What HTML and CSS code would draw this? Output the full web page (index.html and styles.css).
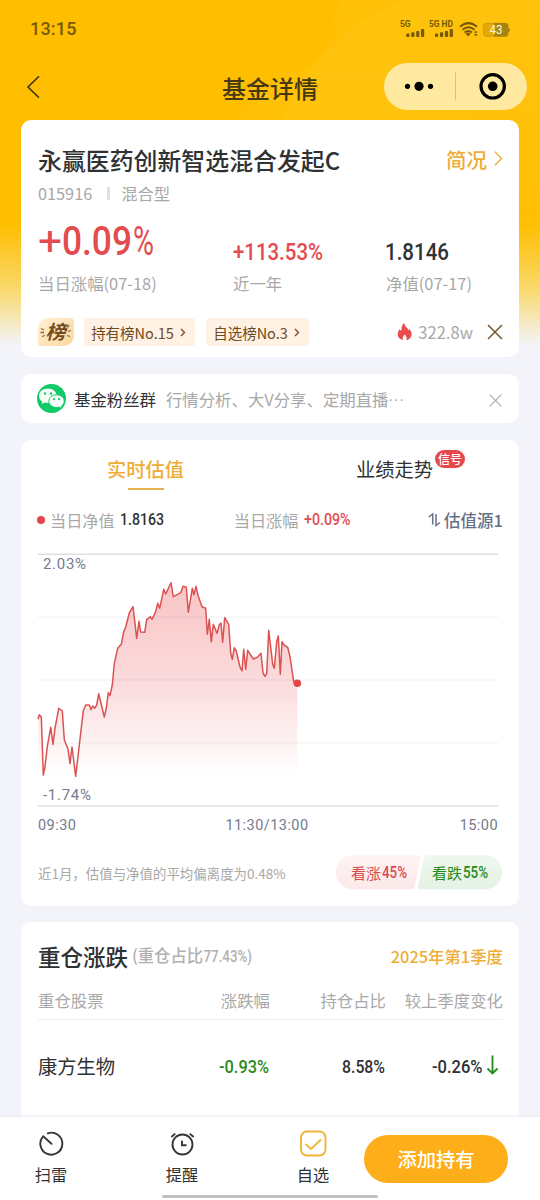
FILE: index.html
```html
<!DOCTYPE html>
<html lang="zh-CN">
<head>
<meta charset="utf-8">
<title>基金详情</title>
<link rel="stylesheet" href="styles.css">
</head>
<body>
<div class="screen">
  <div class="glow glow-a"></div>
  <div class="glow glow-b"></div>
  <div class="glow glow-c"></div>

  <header class="top">
    <div class="status">
      <span class="clock">13:15</span>
      <svg class="status-icons" width="112" height="22" viewBox="398 17 112 22">
        <g fill="#765a08">
          <text x="400" y="26.500" font-size="8.500" font-weight="700" textLength="10.500" lengthAdjust="spacingAndGlyphs">5G</text>
          <text x="429" y="26.500" font-size="8.500" font-weight="700" textLength="24" lengthAdjust="spacingAndGlyphs">5G HD</text>
          <rect x="406.300" y="33.500" width="3.200" height="3.500" rx=".8"/><rect x="411.300" y="32.300" width="3.200" height="4.700" rx=".8"/><rect x="416.200" y="31" width="3.200" height="6" rx=".8"/><rect x="421" y="29" width="3.200" height="8" rx=".8"/>
          <rect x="435" y="33.500" width="3.200" height="3.500" rx=".8"/><rect x="440" y="32.300" width="3.200" height="4.700" rx=".8"/><rect x="444.900" y="31" width="3.200" height="6" rx=".8"/><rect x="449.700" y="29" width="3.200" height="8" rx=".8"/>
          <path d="M465.500 33.500Q468 31.500 470.800 33.500L468.200 36.500Z"/>
          <path d="M474 32.800l1.800-2.400 1.800 2.400zM474 34l1.800 2.600 1.800-2.600z"/>
        </g>
        <g fill="none" stroke="#765a08" stroke-width="2">
          <path d="M460 26.700Q468.500 19.500 477 26.700M462.500 29.700Q468.500 24.700 474.500 29.700M464.500 32.500Q468.300 29.500 472 32.500"/>
        </g>
        <rect x="483.500" y="23.300" width="24.500" height="13" rx="3" fill="#e2a909" stroke="#c29308" stroke-width=".7"/>
        <path d="M494 23H505.500Q508.300 23 508.300 26V28Q510 28 510 30T508.300 32V33.700Q508.300 36.600 505.500 36.600H494Z" fill="#a58510"/>
        <text x="489.500" y="34.200" font-size="12" fill="#fff6d5" textLength="13" lengthAdjust="spacingAndGlyphs">43</text>
      </svg>
    </div>
    <div class="nav">
      <svg class="back" width="16" height="24" viewBox="0 0 16 24"><path d="M13 1.200 2 12 13 22.800" fill="none" stroke="#3c3310" stroke-width="1.600"/></svg>
      <h1>基金详情</h1>
      <div class="capsule">
        <svg width="143" height="47" viewBox="0 0 143 47"><circle cx="23.500" cy="23.300" r="2.600"/><circle cx="35" cy="23.300" r="4.600"/><circle cx="46.500" cy="23.300" r="2.600"/><path d="M71.500 9.500V37.500" stroke="#d8c27f"/><circle cx="108.700" cy="23.300" r="11.700" fill="none" stroke="#000" stroke-width="3.200"/><circle cx="108.700" cy="23.300" r="4.800"/></svg>
      </div>
    </div>
  </header>

  <main>
    <section class="card summary">
      <div class="title-row">
        <h2>永赢医药创新智选混合发起C</h2>
        <span class="brief">简况<svg width="9" height="15" viewBox="0 0 9 15"><path d="M1 .8 7.500 7.500 1 14.200" fill="none" stroke="#eab040" stroke-width="1.400"/></svg></span>
      </div>
      <div class="code-row"><span>015916</span><i></i><span>混合型</span></div>
      <div class="figures">
        <div class="fig">
          <svg class="num red" width="120" height="50" viewBox="0 0 120 50"><g font-size="41"><text x="0" y="35" font-weight="400" textLength="24" lengthAdjust="spacingAndGlyphs">+</text><text x="24" y="35" textLength="70" lengthAdjust="spacingAndGlyphs">0.09</text><text x="95" y="35" font-weight="400" textLength="21" lengthAdjust="spacingAndGlyphs">%</text></g></svg>
          <span>当日涨幅(07-18)</span>
        </div>
        <div class="fig">
          <svg class="num red" width="95" height="50" viewBox="0 0 95 50"><text x="0" y="40" font-size="24.500" textLength="90" lengthAdjust="spacingAndGlyphs">+113.53%</text></svg>
          <span>近一年</span>
        </div>
        <div class="fig">
          <svg class="num" width="70" height="50" viewBox="0 0 70 50"><text x="-1" y="40" font-size="24.500" textLength="64" lengthAdjust="spacingAndGlyphs">1.8146</text></svg>
          <span>净值(07-17)</span>
        </div>
      </div>
      <div class="rank-row">
        <span class="medal"><svg width="36" height="28" viewBox="0 0 36 28"><text x="7.500" y="20.500" font-size="19" textLength="20" lengthAdjust="spacingAndGlyphs">榜</text><path d="M3 10.500l3 1.500M2.500 14.500h3.500M4 18.500l3-1M29 9.500l2.500-2M30 13.500l3-1M29 17.500l3 1" stroke="#936435" stroke-width="1.300"/></svg></span>
        <span class="tag">持有榜No.15<svg width="6" height="9" viewBox="0 0 6 9"><path d="M1 1l3.500 3.500L1 8" fill="none" stroke="#704a1b" stroke-width="1.300"/></svg></span>
        <span class="tag tag-b">自选榜No.3<svg width="6" height="9" viewBox="0 0 6 9"><path d="M1 1l3.500 3.500L1 8" fill="none" stroke="#704a1b" stroke-width="1.300"/></svg></span>
        <span class="heat"><svg width="16" height="18" viewBox="0 0 16 18"><path d="M7 0C8 4 11 5 11.500 7.500Q12.500 7 12 5.500C15.500 9 15.500 14 11.500 16.500Q10 17.500 9.500 17C10.500 14 8.500 13 8 11.500 6 13.500 5 14.500 6 17 1.500 16 0 12.500 1 9.500Q2 6.500 2.500 6 3 7.500 4.500 7.500C4.200 4 5 2 7 0Z" fill="#ea4b4d"/></svg>322.8w</span>
        <svg class="close" width="16" height="16" viewBox="0 0 16 16"><path d="M1 1 15 15M15 1 1 15" stroke="#76552d" stroke-width="1.500"/></svg>
      </div>
    </section>

    <section class="card group">
      <svg class="wechat" width="29" height="29" viewBox="0 0 29 29"><circle cx="14.500" cy="14.500" r="14.500" fill="#0fca67"/><path d="M10.800 4.500C5.500 4.500 2 7.900 2 12c0 2.300 1.200 4.300 3.200 5.600L4.700 20l3-1.500q1.500.4 3.100.4c5.200 0 8.900-3.200 8.900-7.100s-3.600-7.300-8.900-7.300" fill="#f5fff8"/><path d="M19.500 10.800c-4.500 0-7.600 2.800-7.600 6.300s3.100 6.400 7.600 6.400q1.500 0 2.700-.4l2.800 1.300-.5-2.300c1.700-1.200 2.700-2.900 2.700-5 0-3.500-3.200-6.300-7.700-6.300" fill="#f5fff8" stroke="#0fca67"/><g fill="#0fca67"><circle cx="8" cy="9.500" r="1.200"/><circle cx="14" cy="9.500" r="1.200"/><circle cx="17" cy="15.200" r="1.100"/><circle cx="22" cy="15.200" r="1.100"/></g></svg>
      <strong>基金粉丝群</strong><span>行情分析、大V分享、定期直播<em>···</em></span>
      <svg class="close" width="13" height="13" viewBox="0 0 13 13"><path d="M.7.7 12.300 12.300M12.300.7.7 12.300" stroke="#aaa" stroke-width="1.200"/></svg>
    </section>

    <section class="card chart-card">
      <div class="tabs">
        <div class="tab active">实时估值</div>
        <div class="tab">业绩走势<b>信号</b></div>
      </div>
      <div class="legend">
        <i></i><span class="lg-a">当日净值</span>
        <svg class="num" width="46" height="20" viewBox="0 0 46 20"><text x="0" y="14.500" font-size="16.300" textLength="44" lengthAdjust="spacingAndGlyphs">1.8163</text></svg>
        <span class="lg-b">当日涨幅</span>
        <svg class="num red" width="50" height="20" viewBox="0 0 50 20"><text x="0" y="14.500" font-size="16.300" textLength="46.500" lengthAdjust="spacingAndGlyphs">+0.09%</text></svg>
        <span class="source"><svg width="14" height="16" viewBox="0 0 14 16"><path d="M.7 5 4.700 2V12.500M8 2V13.500L12 10.500" fill="none" stroke="#687087" stroke-width="1.500"/></svg>估值源1</span>
      </div>
      <svg class="plot" width="460" height="254" viewBox="38 553 460 254">
        <defs><linearGradient id="fall" gradientUnits="userSpaceOnUse" x1="0" y1="582" x2="0" y2="777"><stop stop-color="#f9c4c5"/><stop offset=".5" stop-color="#fbdadb"/><stop offset="1" stop-color="#fff"/></linearGradient></defs>
        <path d="M38 776.500V719.300L39.300 714.700 41.300 717 43.300 775 45 766.700 47.300 746.700 50.700 727.300 53 744.300 55 728.300 58.700 708.300 62.300 711 64.300 739.700 68 749 70 763.700 72 747 75.700 776.300 83.300 710.700 85.700 705 89.300 705 91 709.700 92.700 706 94.700 708.300 96.700 705 98.700 693.700 104.300 717 106.300 708.300 108.300 692.700 110 695.700 112.300 685 114.300 663.300 117.700 648.300 121.300 644.300 123.700 631.700 125.700 627 129.300 613 133 606.700 135 623.300 136.700 638.300 139 621.300 140.700 632 144.700 632.300 146.700 619.700 150.300 616.700 152 619.300 155.700 611.700 157.700 603.300 159.700 608.300 163.700 589.300 165.700 594 171 582.700 173.300 596.700 180.700 592.700 183 586.300 186.300 587.300 188.300 612.300 192.300 588.300 194 594.700 196 586.300 198.300 596.300 202 606.700 205.700 608.300 207.300 634.300 209.300 619.300 211.300 641.700 213.300 624.300 217 633.300 219.300 625 221 623 222.700 642.300 224.700 617.700 228.700 624.300 230.700 653.300 232.300 659.300 234.300 647.700 236.300 651 240 667 242 671 243.700 649.300 245.700 669.300 247.700 650.300 253.300 659 257.300 657.300 261 653.300 263 673 265 676.300 266.700 673.700 268.700 630.300 272.700 664.300 274.300 668.300 276.700 641.700 278.300 636 280.300 674.300 282 641.700 284 645 287.700 647.300 290 656.700 293.700 681.700 297.300 683V776.500Z" fill="url(#fall)"/>
        <path d="M38 617H498M38 680H498M38 743H498" stroke="#3b5060" stroke-opacity=".08" stroke-width="1.200"/>
        <path d="M38 554.300H498M38 806H498" stroke="#dedfe1" stroke-width="1.400"/>
        <path d="M38 719.300 39.300 714.700 41.300 717 43.300 775 45 766.700 47.300 746.700 50.700 727.300 53 744.300 55 728.300 58.700 708.300 62.300 711 64.300 739.700 68 749 70 763.700 72 747 75.700 776.300 83.300 710.700 85.700 705 89.300 705 91 709.700 92.700 706 94.700 708.300 96.700 705 98.700 693.700 104.300 717 106.300 708.300 108.300 692.700 110 695.700 112.300 685 114.300 663.300 117.700 648.300 121.300 644.300 123.700 631.700 125.700 627 129.300 613 133 606.700 135 623.300 136.700 638.300 139 621.300 140.700 632 144.700 632.300 146.700 619.700 150.300 616.700 152 619.300 155.700 611.700 157.700 603.300 159.700 608.300 163.700 589.300 165.700 594 171 582.700 173.300 596.700 180.700 592.700 183 586.300 186.300 587.300 188.300 612.300 192.300 588.300 194 594.700 196 586.300 198.300 596.300 202 606.700 205.700 608.300 207.300 634.300 209.300 619.300 211.300 641.700 213.300 624.300 217 633.300 219.300 625 221 623 222.700 642.300 224.700 617.700 228.700 624.300 230.700 653.300 232.300 659.300 234.300 647.700 236.300 651 240 667 242 671 243.700 649.300 245.700 669.300 247.700 650.300 253.300 659 257.300 657.300 261 653.300 263 673 265 676.300 266.700 673.700 268.700 630.300 272.700 664.300 274.300 668.300 276.700 641.700 278.300 636 280.300 674.300 282 641.700 284 645 287.700 647.300 290 656.700 293.700 681.700 297.300 683" fill="none" stroke="#db5253" stroke-width="1.500" stroke-linejoin="round"/>
        <circle cx="297.300" cy="683.300" r="3.800" fill="#e64648"/>
        <text x="43" y="568.500" textLength="43">2.03%</text><text x="43" y="800" textLength="48">-1.74%</text>
      </svg>
      <div class="axis"><span>09:30</span><span>11:30/13:00</span><span>15:00</span></div>
      <div class="vote-row">
        <span class="note">近1月，估值与净值的平均偏离度为0.48%</span>
        <svg class="vote" width="167" height="35" viewBox="336 855 167 35">
          <defs><linearGradient id="up" x2="0" y2="1"><stop stop-color="#fff4f4"/><stop offset="1" stop-color="#fce8e9"/></linearGradient><linearGradient id="down" x2="0" y2="1"><stop stop-color="#f0f8f0"/><stop offset="1" stop-color="#e4f2e4"/></linearGradient></defs>
          <path d="M353 855H419Q421 855 420.500 857L414.500 887Q414 889.300 412 889.300H353A17.150 17.150 0 0 1 353 855Z" fill="url(#up)"/>
          <path d="M427 855H485A17.150 17.150 0 0 1 485 889.300H419.500Q417.500 889.300 418 887L424 857Q424.500 855 427 855Z" fill="url(#down)"/>
          <g fill="#db4b4e"><text x="351" y="878.500" class="cjk">看涨</text><text x="382" y="878" textLength="25" lengthAdjust="spacingAndGlyphs">45%</text></g>
          <g fill="#278b1c"><text x="432" y="878.500" class="cjk">看跌</text><text x="463" y="878" textLength="25" lengthAdjust="spacingAndGlyphs">55%</text></g>
        </svg>
      </div>
    </section>

    <section class="card holdings">
      <div class="hold-head"><h3>重仓涨跌</h3><svg class="ratio" width="122" height="28" viewBox="0 0 122 28"><text x="0" y="20" textLength="71" lengthAdjust="spacingAndGlyphs">(重仓占比</text><text class="latin" x="71.500" y="20" textLength="48.500" lengthAdjust="spacingAndGlyphs">77.43%)</text></svg><span>2025年第1季度</span></div>
      <div class="grid heads"><span>重仓股票</span><span>涨跌幅</span><span>持仓占比</span><span>较上季度变化</span></div>
      <div class="grid stock">
        <span>康方生物</span>
        <span><svg class="num green" width="51" height="24" viewBox="0 0 51 24"><text x="0" y="18.500" font-size="19" textLength="50" lengthAdjust="spacingAndGlyphs">-0.93%</text></svg></span>
        <span><svg class="num" width="44" height="24" viewBox="0 0 44 24"><text x="0" y="18.500" font-size="19" textLength="43" lengthAdjust="spacingAndGlyphs">8.58%</text></svg></span>
        <span><svg class="num" width="71" height="24" viewBox="0 0 71 24"><text x="0" y="18.500" font-size="19" textLength="50.500" lengthAdjust="spacingAndGlyphs">-0.26%</text><path d="M60.500 1.500V19.500M55.500 14.500 60.500 19.500 65.500 14.500" fill="none" stroke="#249123" stroke-width="1.900"/></svg></span>
      </div>
    </section>
  </main>

  <footer>
    <div class="action"><svg width="28" height="28" viewBox="0 0 28 28"><path d="M10.700 4.300A11 11 0 1 1 6.200 7.300L14.500 14.800" fill="none" stroke="#363636" stroke-width="1.900" stroke-linecap="round"/></svg><span>扫雷</span></div>
    <div class="action"><svg width="28" height="28" viewBox="0 0 28 28"><g fill="none" stroke="#363636" stroke-width="1.900"><circle cx="14.500" cy="15.500" r="10"/><path d="M14 11.700V16.200H18.500M3.300 8 7.300 4.600M21.700 4.600 25.700 8"/></g></svg><span>提醒</span></div>
    <div class="action"><svg width="28" height="28" viewBox="0 0 28 28"><rect x="2" y="2.500" width="24.500" height="24" rx="6" fill="none" stroke="#efb53b" stroke-width="1.900"/><path d="M6.500 15 12 20 22 10.500" fill="none" stroke="#efb53b" stroke-width="1.900"/></svg><span>自选</span></div>
    <button>添加持有</button>
    <div class="home"></div>
  </footer>
</div>
</body>
</html>
```
FILE: styles.css
```css
* { box-sizing: border-box; }
body { margin: 0; font-family: "Noto Sans CJK SC", sans-serif; color: #303133; }
h1, h2, h3 { margin: 0; font-weight: 500; }
svg { display: block; flex: none; overflow: visible; }
.screen { position: relative; width: 540px; height: 1200px; overflow: hidden; background: linear-gradient(#ffbe00 0, #ffbe00 225px, #f9d96e 290px, #f3f4fa 345px, #f3f4fa); }
.glow { position: absolute; border-radius: 50%; -webkit-mask-image: linear-gradient(#000 150px, transparent 290px); mask-image: linear-gradient(#000 150px, transparent 290px); }
.glow-a { left: 268px; top: -12px; width: 410px; height: 410px; background: #ffc61a66; }
.glow-b { left: 326px; top: -140px; width: 430px; height: 430px; background: #ffcb1a30; }
.glow-c { left: 206px; top: 60px; width: 300px; height: 300px; background: #ffcb1a30; }

.top { position: relative; height: 120px; }
.status { display: flex; justify-content: space-between; height: 55px; padding: 17px 30px 0; }
.clock { font: 500 18px/24px Roboto, sans-serif; letter-spacing: .2px; color: #765a08; }
.status-icons { font-family: Roboto, sans-serif; }
.nav { display: flex; align-items: center; justify-content: space-between; height: 64px; padding: 0 13px 0 26px; }
.nav h1 { font-size: 24px; line-height: 36px; color: #443912; margin: 2px 0 0 114px; font-weight: 500; }
.nav .capsule { width: 143px; height: 47px; border-radius: 24px; background: #ffe9a1; margin-top: -2px; }

main { position: relative; display: flex; flex-direction: column; gap: 17px; padding: 0 21px; }
.card { background: #fff; border-radius: 10px; }
.num { font-family: Roboto, sans-serif; font-weight: 500; fill: #303133; }
.red { fill: #e24c4f; }
.green { fill: #278b1c; }

.summary { height: 237px; padding: 21px 16px 0 17px; }
.title-row { display: flex; justify-content: space-between; height: 38px; align-items: center; }
.title-row h2 { font-size: 23.900px; line-height: 38px; white-space: nowrap; }
.brief { display: flex; align-items: center; gap: 7px; font-size: 20.500px; font-weight: 500; line-height: 34px; color: #eead36; margin-top: -3px; }
.code-row { display: flex; align-items: center; height: 28px; font-size: 16.300px; color: #a8a8a8; }
.code-row i { width: 3px; height: 13px; background: #e0e0e0; margin: 0 11px 0 15px; }
.figures { display: grid; grid-template-columns: 195px 153px 1fr; margin-top: 14px; }
.fig { height: 76px; }
.fig span { display: block; font-size: 16.400px; line-height: 24px; color: #a8a8a8; margin-top: 1px; white-space: nowrap; }
.fig .num { margin-top: -1px; }
.rank-row { display: flex; align-items: center; height: 30px; margin-top: 20px; }
.medal { width: 36px; height: 28px; border-radius: 10px 4px 10px 3px; background: linear-gradient(135deg, #fff0d5, #fbd79f); margin-right: 10px; }
.medal text { font-weight: 700; font-style: italic; fill: #75491d; }
.tag { display: flex; align-items: center; justify-content: center; gap: 6px; width: 111px; height: 28px; border-radius: 4px; background: #fff2e5; color: #704a1b; font-size: 14.500px; white-space: nowrap; padding-right: 2px; }
.tag-b { width: 103px; margin-left: 11px; }
.heat { display: flex; align-items: center; gap: 5px; margin-left: auto; color: #a8a8a8; font-size: 16.600px; }
.rank-row .close { margin-left: 14px; }

.group { display: flex; align-items: center; height: 49px; padding: 0 16px; }
.group strong { font-size: 16.400px; font-weight: 400; margin: 0 10px 0 8px; }
.group span { font-size: 16.400px; color: #a8a8a8; white-space: nowrap; }
.group em { font-family: Roboto, sans-serif; font-style: normal; letter-spacing: 1.200px; }
.group .close { margin-left: auto; margin-right: 1px; margin-top: 3px; }

.chart-card { height: 466px; padding-top: 1px; }
.tabs { display: flex; height: 62px; }
.tab { position: relative; width: 249px; text-align: center; font-size: 19.300px; line-height: 56px; }
.tab.active { color: #eead36; font-weight: 500; }
.tab.active::after { content: ""; position: absolute; left: 107px; top: 47px; width: 36px; height: 2px; background: #e2b34e; }
.tab b { position: absolute; left: 165px; top: 9px; width: 30px; height: 18px; border-radius: 9px; background: #e5484a; color: #fff; font-size: 12px; line-height: 18px; font-weight: 500; }
.legend { display: flex; align-items: center; height: 34px; padding: 0 16px; font-size: 16.200px; color: #a8a8a8; }
.legend i { width: 8px; height: 8px; border-radius: 50%; background: #e5484a; margin-right: 5px; }
.lg-a { margin-right: 5px; }
.lg-b { margin-left: 68px; margin-right: 5px; }
.source { display: flex; align-items: center; gap: 2px; margin-left: auto; color: #687087; font-size: 16.500px; font-weight: 500; }
.plot { margin: 16px 0 0 17px; font: 15px Roboto, sans-serif; }
.plot text { fill: #747b8e; }
.axis { display: flex; justify-content: space-between; padding: 0 21px 0 17px; height: 36px; font: 14.500px/38px Roboto, sans-serif; letter-spacing: .45px; color: #747b8e; }
.axis span:nth-child(2) { margin-right: 2px; }
.vote-row { display: flex; align-items: center; justify-content: space-between; padding: 0 16px 0 17px; height: 35px; margin-top: 12px; }
.note { font-size: 13.450px; color: #a8a8a8; white-space: nowrap; }
.vote { font: 500 16px Roboto, sans-serif; }
.vote .cjk { font: 400 15px "Noto Sans CJK SC", sans-serif; }

.holdings { height: 230px; padding: 17px 16px 0 17px; margin-top: -1px; }
.hold-head { display: flex; align-items: center; height: 34px; }
.hold-head h3 { font-size: 22.500px; line-height: 34px; margin-right: 4px; }
.hold-head span { margin-left: auto; color: #eead36; font-size: 16.400px; font-weight: 500; }
.ratio { fill: #b0b0b0; font-size: 16.500px; font-weight: 500; }
.ratio .latin { font-family: Roboto, sans-serif; }
.grid { display: grid; grid-template-columns: 120px 112px 116px 1fr; }
.grid > span { justify-self: end; }
.grid > span:first-child { justify-self: start; }
.heads { height: 47px; line-height: 54px; border-bottom: 1px solid #eee; font-size: 16.400px; color: #a8a8a8; white-space: nowrap; }
.stock { height: 91px; align-items: center; font-size: 19.300px; }

footer { position: absolute; left: 0; bottom: 0; display: flex; width: 540px; height: 83px; background: #fff; box-shadow: 0 -1px 2px #e8eaf0; padding-left: 31px; }
.action { display: flex; flex-direction: column; align-items: center; width: 40px; padding-top: 12px; margin-right: 91px; font-size: 16.200px; line-height: 24px; white-space: nowrap; }
.action span { margin-top: 5px; }
.action:nth-child(3) { margin-right: 31px; }
footer button { width: 144px; height: 48px; margin-top: 18px; padding: 0; border: 0; border-radius: 24px; background: #feae18; color: #fff; font: 500 19.300px/48px "Noto Sans CJK SC", sans-serif; }
.home { position: absolute; left: 162px; bottom: 2px; width: 216px; height: 3px; border-radius: 2px; background: #c1c1c1; }
```
